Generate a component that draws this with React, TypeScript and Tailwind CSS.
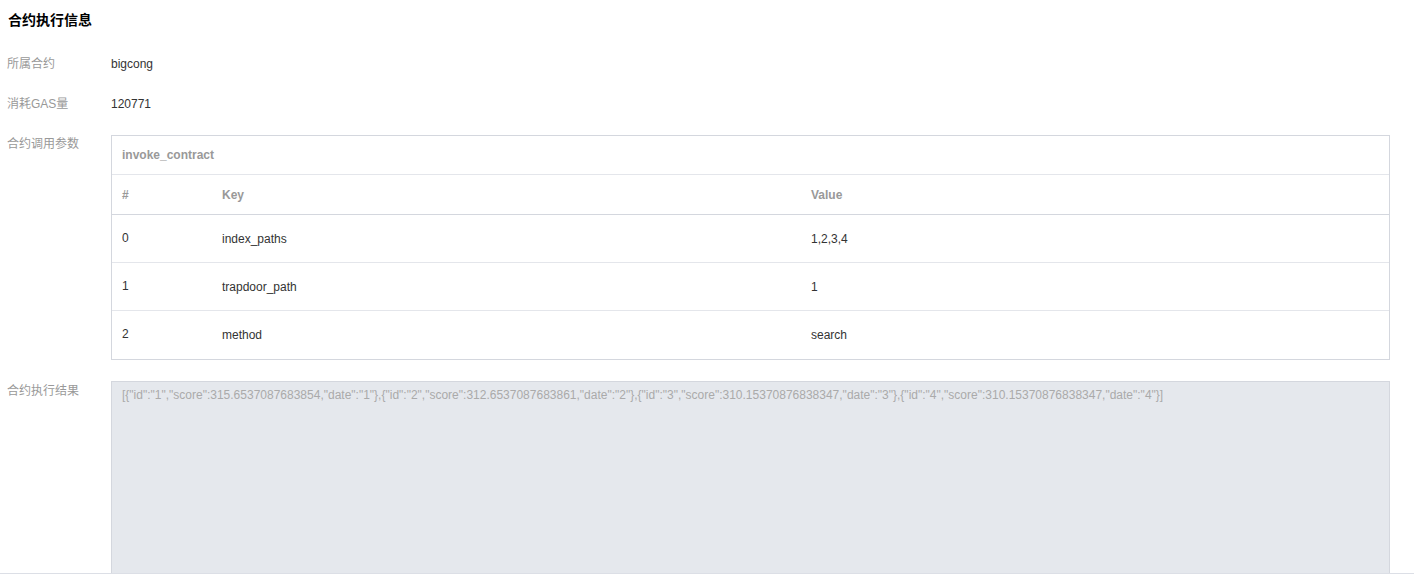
const result =
  '[{"id":"1","score":315.6537087683854,"date":"1"},{"id":"2","score":312.6537087683861,"date":"2"},{"id":"3","score":310.15370876838347,"date":"3"},{"id":"4","score":310.15370876838347,"date":"4"}]';

const params = [
  { idx: "0", key: "index_paths", value: "1,2,3,4" },
  { idx: "1", key: "trapdoor_path", value: "1" },
  { idx: "2", key: "method", value: "search" },
];

export default function App() {
  return (
    <div
      className="w-[1414px] h-[577px] bg-white text-[12px] text-[#333] overflow-hidden"
      style={{ fontFamily: '"Liberation Sans", Arial, "Noto Sans CJK SC", sans-serif' }}
    >
      <div className="border-b border-[#dcdfe6]">
        <h3 className="pl-[8px] pt-[10px] h-[53px] text-[14px] font-bold text-black">合约执行信息</h3>

        <div className="flex h-[40px] items-start pt-[2px]">
          <span className="w-[111px] pl-[7px] text-[#999]">所属合约</span>
          <span>bigcong</span>
        </div>
        <div className="flex h-[41px] items-start pt-[2px]">
          <span className="w-[111px] pl-[7px] text-[#999]">消耗GAS量</span>
          <span>120771</span>
        </div>

        <div className="flex pt-[1px]">
          <span className="w-[111px] pl-[7px] text-[#999]">合约调用参数</span>
          <div className="w-[1279px] border border-[#d4d7de]">
            <div className="h-[39px] flex items-center pl-[10px] font-bold text-[#999] border-b border-[#e4e6eb]">
              invoke_contract
            </div>
            <div className="h-[40px] flex items-center font-bold text-[#999] border-b border-[#d4d7de]">
              <span className="w-[100px] pl-[10px]">#</span>
              <span className="w-[589px] pl-[10px]">Key</span>
              <span className="pl-[10px]">Value</span>
            </div>
            {params.map((p, i) => (
              <div
                key={p.idx}
                className={`h-[48px] flex items-center ${i < params.length - 1 ? "border-b border-[#e4e6eb]" : ""}`}
              >
                <span className="w-[100px] pl-[10px] -mt-[2px]">{p.idx}</span>
                <span className="w-[589px] pl-[10px]">{p.key}</span>
                <span className="pl-[10px]">{p.value}</span>
              </div>
            ))}
          </div>
        </div>

        <div className="flex pt-[21px]">
          <span className="w-[111px] pl-[7px] pt-[1px] text-[#999]">合约执行结果</span>
          <div className="w-[1279px] h-[192px] bg-[#e5e8ed] border border-b-0 border-[#d4d7de] px-[10px] pt-[4px] text-[#aaa] break-all">
            {result}
          </div>
        </div>
      </div>
    </div>
  );
}
